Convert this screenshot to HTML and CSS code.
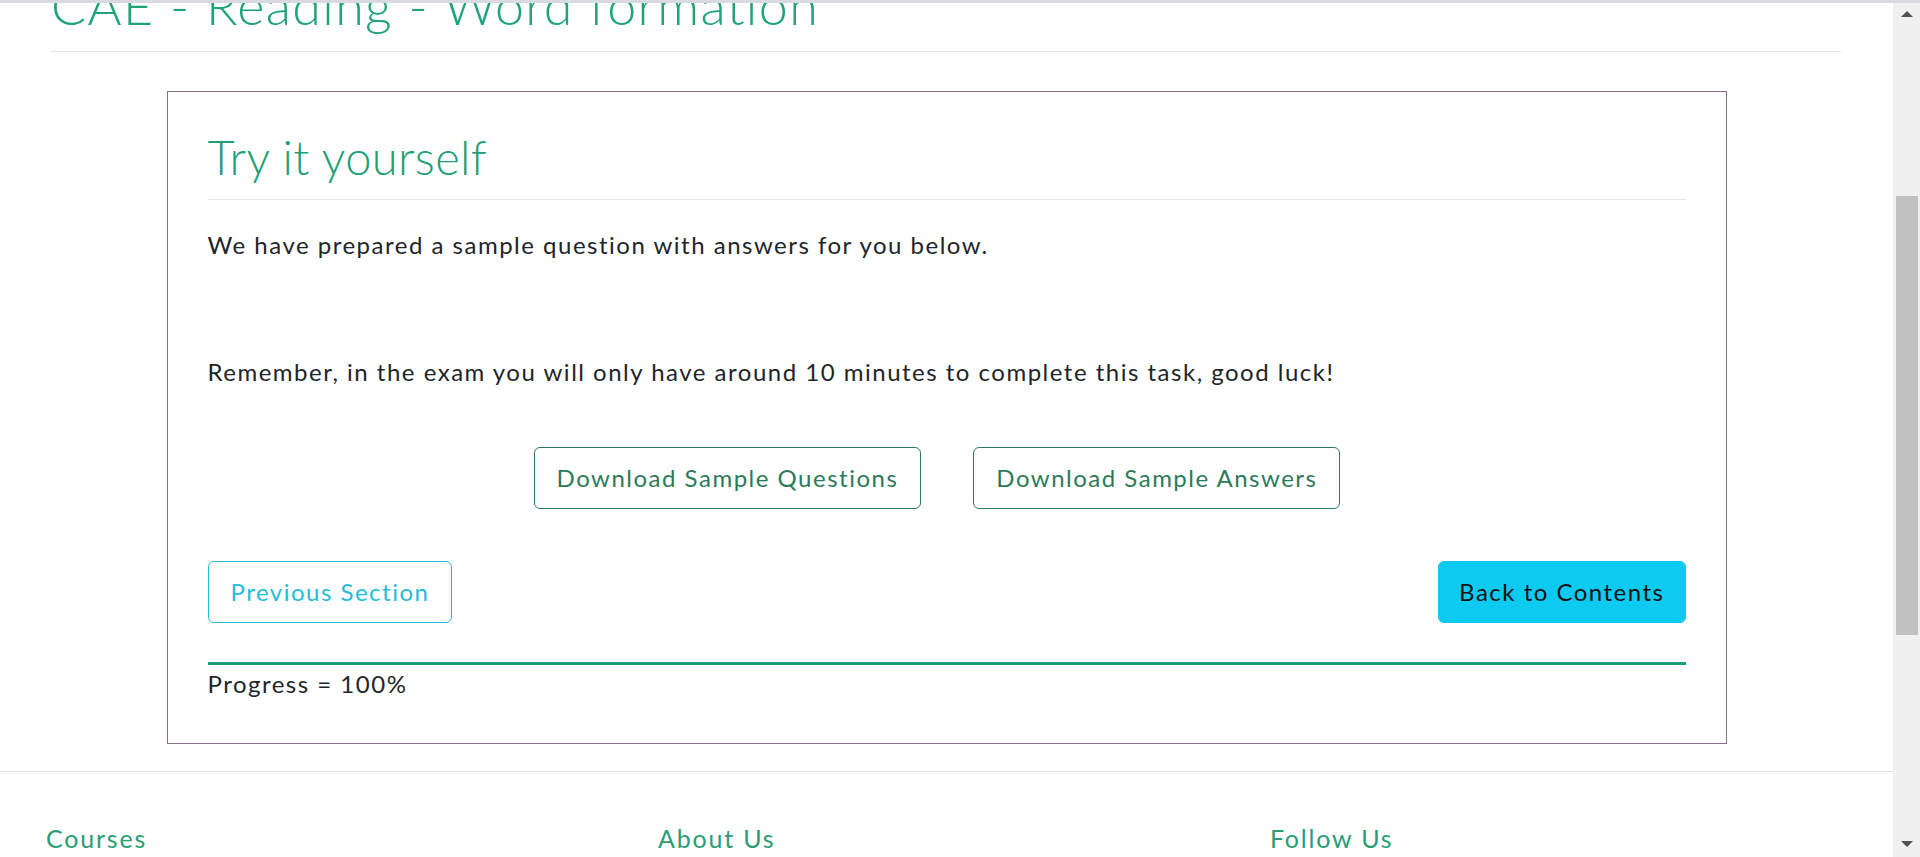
FILE: index.html
```html
<!DOCTYPE html>
<html lang="en">
<head>
<meta charset="utf-8">
<title>CAE - Reading - Word formation</title>
<link rel="stylesheet" href="styles.css">
</head>
<body>
<div class="topbar"></div>
<div class="viewport">
  <div class="page">
    <div class="container">
      <h1 class="page-title">CAE - Reading - Word formation</h1>
      <hr class="rule">
    </div>
    <section class="panel">
      <h2 class="panel-title">Try it yourself</h2>
      <hr class="rule">
      <p class="intro">We have prepared a sample question with answers for you below.</p>
      <p class="remember">Remember, in the exam you will only have around 10 minutes to complete this task, good luck!</p>
      <div class="downloads">
        <a class="btn btn-outline-success">Download Sample Questions</a>
        <a class="btn btn-outline-success">Download Sample Answers</a>
      </div>
      <div class="nav-row">
        <a class="btn btn-outline-info">Previous Section</a>
        <a class="btn btn-info">Back to Contents</a>
      </div>
      <div class="progress-line"></div>
      <p class="progress-text">Progress = 100%</p>
    </section>
    <footer class="footer">
      <div class="footer-row">
        <h3 class="footer-heading">Courses</h3>
        <h3 class="footer-heading">About Us</h3>
        <h3 class="footer-heading">Follow Us</h3>
      </div>
    </footer>
  </div>
  <div class="scrollbar">
    <div class="arrow arrow-up"></div>
    <div class="track"><div class="thumb"></div></div>
    <div class="arrow arrow-down"></div>
  </div>
</div>
</body>
</html>
```
FILE: styles.css
```css
html, body {
  margin: 0;
  padding: 0;
  height: 857px;
  overflow: hidden;
  background: #fff;
}
body {
  font-family: "Lato", "Open Sans", sans-serif;
  color: #212529;
  font-size: 24px;
  letter-spacing: 1.5px;
}
.topbar {
  height: 3px;
  background: #d9d9e1;
}
.viewport {
  display: flex;
  height: 854px;
}
.page {
  flex: 1;
  overflow: hidden;
}
.container {
  padding: 0 52px 0 51px;
}
.page-title {
  margin: -28px 0 16px;
  font-size: 52px;
  line-height: 60px;
  font-weight: 300;
  letter-spacing: 1.35px;
  color: #1fa37a;
  white-space: nowrap;
}
.rule {
  margin: 0;
  border: 0;
  border-top: 1px solid #e5e5e5;
  height: 0;
}
.panel {
  width: 1478px;
  margin: 39px auto 0;
  border: 1px solid #8c6d8c;
  padding: 37px 40px 42px;
}
.panel-title {
  margin: 0 0 14px;
  font-size: 47px;
  line-height: 56px;
  font-weight: 300;
  letter-spacing: 0.4px;
  color: #1e9f78;
}
.intro, .remember, .progress-text {
  margin: 0;
  line-height: 34px;
}
.intro { margin-top: 28px; }
.remember { margin-top: 93px; }
.downloads {
  display: flex;
  justify-content: center;
  gap: 52px;
  padding-right: 19px;
  margin-top: 58px;
}
.btn {
  display: inline-flex;
  align-items: center;
  height: 62px;
  box-sizing: border-box;
  padding: 0 22px;
  border: 1px solid transparent;
  border-radius: 6px;
  font-size: 24px;
  line-height: 34px;
  text-decoration: none;
}
.btn-outline-success {
  color: #2d7a5a;
  border-color: #2d7a5a;
}
.nav-row {
  display: flex;
  justify-content: space-between;
  margin-top: 52px;
}
.btn-outline-info {
  color: #25bcdb;
  border-color: #25bcdb;
}
.btn-info {
  background: #0dcaf0;
  border-color: #0dcaf0;
  color: #111;
  padding: 0 20px;
}
.progress-line {
  margin-top: 39px;
  height: 3px;
  background: #1b9c7b;
}
.progress-text { margin-top: 2px; }
.footer {
  margin-top: 27px;
  border-top: 1px solid #e2e2e2;
}
.footer-row {
  display: flex;
  padding-left: 46px;
  margin-top: 49px;
}
.footer-heading {
  width: 612px;
  margin: 0;
  font-size: 25px;
  line-height: 34px;
  font-weight: 400;
  letter-spacing: 1.8px;
  color: #2a9d74;
}
.scrollbar {
  width: 27px;
  background: #f0f0f0;
  display: flex;
  flex-direction: column;
  align-items: center;
}
.arrow {
  width: 0;
  height: 0;
  border-left: 6px solid transparent;
  border-right: 6px solid transparent;
}
.arrow-up {
  margin-top: 8px;
  border-bottom: 6px solid #505050;
}
.arrow-down {
  margin-bottom: 10px;
  border-top: 6px solid #505050;
}
.track {
  flex: 1;
  width: 100%;
  display: flex;
  justify-content: center;
}
.thumb {
  width: 22px;
  height: 439px;
  margin-top: 179px;
  background: #c1c1c1;
}
```
